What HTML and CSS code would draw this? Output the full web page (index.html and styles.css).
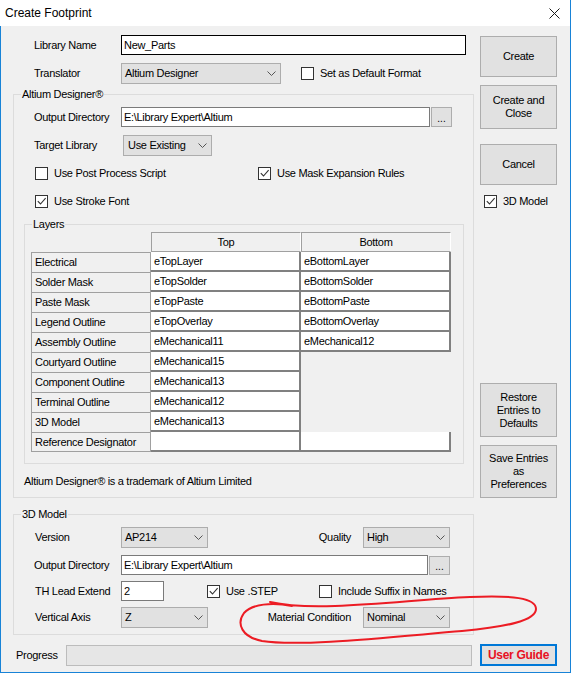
FILE: index.html
```html
<!DOCTYPE html>
<html>
<head>
<meta charset="utf-8">
<title>Create Footprint</title>
<link rel="stylesheet" href="styles.css">
</head>
<body>
<div class="window">
  <div class="titlebar">
    <span class="title">Create Footprint</span>
    <svg class="close" width="11" height="11" viewBox="0 0 11 11"><path d="M0.5 0.5L10.5 10.5M10.5 0.5L0.5 10.5" stroke="#1a1a1a" stroke-width="1"/></svg>
  </div>
  <div class="client">
    <div class="main">
      <div class="left">
        <div class="row r-libname">
          <span class="lbl lbl-top">Library Name</span>
          <div class="textbox tb-focus tb-libname">New_Parts</div>
        </div>
        <div class="row r-translator">
          <span class="lbl lbl-top">Translator</span>
          <div class="combo cb-translator"><span>Altium Designer</span><svg class="chev" width="9" height="5" viewBox="0 0 9 5"><path d="M0.5 0.5L4.5 4.5L8.5 0.5" fill="none" stroke="#555"/></svg></div>
          <div class="check cb-default"><span class="box"></span><span>Set as Default Format</span></div>
        </div>

        <div class="group g-altium">
          <span class="gtitle">Altium Designer®</span>
          <div class="row r-outdir">
            <span class="lbl lbl-grp">Output Directory</span>
            <div class="textbox tb-outdir">E:\Library Expert\Altium</div>
            <div class="dots dots-a">...</div>
          </div>
          <div class="row r-target">
            <span class="lbl lbl-grp">Target Library</span>
            <div class="combo cb-target"><span>Use Existing</span><svg class="chev" width="9" height="5" viewBox="0 0 9 5"><path d="M0.5 0.5L4.5 4.5L8.5 0.5" fill="none" stroke="#555"/></svg></div>
          </div>
          <div class="row r-checks1">
            <div class="check check-post"><span class="box"></span><span>Use Post Process Script</span></div>
            <div class="check"><span class="box"><svg width="11" height="11" viewBox="0 0 11 11"><path d="M1.8 5.2L4.5 8L9.6 2.2" fill="none" stroke="#333" stroke-width="1.1"/></svg></span><span>Use Mask Expansion Rules</span></div>
          </div>
          <div class="row r-checks2">
            <div class="check"><span class="box"><svg width="11" height="11" viewBox="0 0 11 11"><path d="M1.8 5.2L4.5 8L9.6 2.2" fill="none" stroke="#333" stroke-width="1.1"/></svg></span><span>Use Stroke Font</span></div>
          </div>

          <div class="group g-layers">
            <span class="gtitle">Layers</span>
            <div class="layers-grid">
              <div class="corner"></div><div class="hdr">Top</div><div class="hdr">Bottom</div>
              <div class="name">Electrical</div><div class="val">eTopLayer</div><div class="val">eBottomLayer</div>
              <div class="name">Solder Mask</div><div class="val">eTopSolder</div><div class="val">eBottomSolder</div>
              <div class="name">Paste Mask</div><div class="val">eTopPaste</div><div class="val">eBottomPaste</div>
              <div class="name">Legend Outline</div><div class="val">eTopOverlay</div><div class="val">eBottomOverlay</div>
              <div class="name">Assembly Outline</div><div class="val">eMechanical11</div><div class="val">eMechanical12</div>
              <div class="name">Courtyard Outline</div><div class="val">eMechanical15</div><div class="empty"></div>
              <div class="name">Component Outline</div><div class="val">eMechanical13</div><div class="empty"></div>
              <div class="name">Terminal Outline</div><div class="val">eMechanical12</div><div class="empty"></div>
              <div class="name">3D Model</div><div class="val">eMechanical13</div><div class="empty"></div>
              <div class="name name-last">Reference Designator</div><div class="val"></div><div class="val"></div>
            </div>
          </div>
          <div class="trademark">Altium Designer® is a trademark of Altium Limited</div>
        </div>

        <div class="group g-3d">
          <span class="gtitle">3D Model</span>
          <div class="row r-version">
            <span class="lbl lbl-3d">Version</span>
            <div class="combo cb-small"><span>AP214</span><svg class="chev" width="9" height="5" viewBox="0 0 9 5"><path d="M0.5 0.5L4.5 4.5L8.5 0.5" fill="none" stroke="#555"/></svg></div>
            <span class="lbl lbl-right">Quality</span>
            <div class="combo cb-small"><span>High</span><svg class="chev" width="9" height="5" viewBox="0 0 9 5"><path d="M0.5 0.5L4.5 4.5L8.5 0.5" fill="none" stroke="#555"/></svg></div>
          </div>
          <div class="row r-outdir3">
            <span class="lbl lbl-grp">Output Directory</span>
            <div class="textbox tb-outdir3">E:\Library Expert\Altium</div>
            <div class="dots dots-b">...</div>
          </div>
          <div class="row r-th">
            <span class="lbl lbl-3d">TH Lead Extend</span>
            <div class="textbox tb-th">2</div>
            <div class="check check-step"><span class="box"><svg width="11" height="11" viewBox="0 0 11 11"><path d="M1.8 5.2L4.5 8L9.6 2.2" fill="none" stroke="#333" stroke-width="1.1"/></svg></span><span>Use .STEP</span></div>
            <div class="check"><span class="box"></span><span>Include Suffix in Names</span></div>
          </div>
          <div class="row r-vaxis">
            <span class="lbl lbl-3d">Vertical Axis</span>
            <div class="combo cb-small"><span>Z</span><svg class="chev" width="9" height="5" viewBox="0 0 9 5"><path d="M0.5 0.5L4.5 4.5L8.5 0.5" fill="none" stroke="#555"/></svg></div>
            <span class="lbl lbl-right">Material Condition</span>
            <div class="combo cb-small"><span>Nominal</span><svg class="chev" width="9" height="5" viewBox="0 0 9 5"><path d="M0.5 0.5L4.5 4.5L8.5 0.5" fill="none" stroke="#555"/></svg></div>
          </div>
        </div>
      </div>

      <div class="right">
        <div class="btn b-create">Create</div>
        <div class="btn b-cc">Create and<br>Close</div>
        <div class="btn b-cancel">Cancel</div>
        <div class="check chk-3d"><span class="box"><svg width="11" height="11" viewBox="0 0 11 11"><path d="M1.8 5.2L4.5 8L9.6 2.2" fill="none" stroke="#333" stroke-width="1.1"/></svg></span><span>3D Model</span></div>
        <div class="btn b-restore">Restore<br>Entries to<br>Defaults</div>
        <div class="btn b-save">Save Entries<br>as<br>Preferences</div>
      </div>
    </div>

    <div class="progress-row">
      <span class="lbl lbl-progress">Progress</span>
      <div class="progress"></div>
      <div class="btn b-guide">User Guide</div>
    </div>
  </div>

  <svg class="annotation" width="571" height="673" viewBox="0 0 571 673">
    <path d="M292 606 C272 602 252 604 244 613 C236 624 242 637 262 641 C300 647 390 637 462 631 C505 627 536 621 536 609 C536 598 512 595 470 597 C425 599 385 604 335 606 C305 607 283 605 270 602" fill="none" stroke="#ec1c24" stroke-width="2" stroke-linecap="round" stroke-linejoin="round"/>
  </svg>
</div>
</body>
</html>
```

FILE: styles.css
```css
* {
  box-sizing: border-box;
}

html, body {
  margin: 0;
  padding: 0;
}

body {
  background: #ffffff;
  font-family: "Liberation Sans", Arial, sans-serif;
  font-size: 11px;
  letter-spacing: -0.3px;
  line-height: 13px;
  color: #000;
}

.window {
  position: relative;
  width: 571px;
  height: 673px;
  border-right: 1px solid #1883d7;
  border-bottom: 1px solid #1883d7;
  display: flex;
  flex-direction: column;
  background: #f0f0f0;
}

.titlebar {
  height: 26px;
  flex-shrink: 0;
  background: #ffffff;
  display: flex;
  align-items: center;
  justify-content: space-between;
  padding: 0 10px 0 5px;
}

.title {
  font-size: 12px;
  letter-spacing: 0;
}

.close {
  display: block;
}

.client {
  flex: 1;
  border-left: 1px solid #1883d7;
  background: #f0f0f0;
  display: flex;
  flex-direction: column;
}

.main {
  display: flex;
  height: 609px;
}

.left {
  width: 473px;
  padding-left: 12px;
  flex-shrink: 0;
}

.right {
  width: 77px;
  margin-left: 6px;
  display: flex;
  flex-direction: column;
}

/* rows */
.row {
  display: flex;
  align-items: center;
}

.lbl {
  flex-shrink: 0;
  white-space: nowrap;
}

.lbl-top { width: 87px; }
.lbl-grp { width: 87px; }
.lbl-3d { width: 86px; }

.lbl-right {
  width: 155px;
  text-align: right;
  padding-right: 12px;
}

.r-libname {
  margin-top: 9px;
  height: 20px;
  padding-left: 21px;
}

.r-translator {
  margin-top: 8px;
  height: 21px;
  padding-left: 21px;
}

/* controls */
.textbox {
  height: 20px;
  background: #ffffff;
  border: 1px solid #7a7a7a;
  padding-left: 2px;
  display: flex;
  align-items: center;
  white-space: nowrap;
  flex-shrink: 0;
}

.tb-focus {
  border-color: #000;
}

.tb-libname { width: 345px; }
.tb-outdir { width: 309px; }
.tb-outdir3 { width: 307px; }
.tb-th { width: 43px; }

.combo {
  height: 21px;
  background: #e1e1e1;
  border: 1px solid #adadad;
  display: flex;
  align-items: center;
  justify-content: space-between;
  padding: 0 4px 0 3px;
  white-space: nowrap;
  flex-shrink: 0;
}

.chev {
  display: block;
  flex-shrink: 0;
}

.cb-translator { width: 160px; }
.cb-target { width: 89px; margin-left: 2px; padding-left: 4px; }
.cb-small { width: 87px; }

.dots {
  width: 21px;
  height: 20px;
  margin-left: 1px;
  background: #e1e1e1;
  border: 1px solid #adadad;
  display: flex;
  align-items: flex-end;
  justify-content: center;
  padding-bottom: 3px;
  font-size: 10px;
  letter-spacing: 0;
  line-height: 8px;
  flex-shrink: 0;
}

.dots-b {
  height: 19px;
}

/* checkboxes */
.check {
  display: flex;
  align-items: center;
  white-space: nowrap;
  flex-shrink: 0;
}

.box {
  width: 13px;
  height: 13px;
  border: 1px solid #333;
  background: #ffffff;
  margin-right: 6px;
  flex-shrink: 0;
  display: flex;
}

.box svg {
  display: block;
}

.cb-default { margin-left: 20px; }
.check-post { width: 223px; }
.check-step { width: 112px; margin-left: 43px; }

/* groups */
.group {
  position: relative;
  border: 1px solid #dcdcdc;
}

.gtitle {
  position: absolute;
  top: -8px;
  left: 7px;
  padding: 0 1px;
  line-height: 14px;
  background: #f0f0f0;
  white-space: nowrap;
}

.g-altium {
  margin-top: 10px;
  width: 461px;
  height: 404px;
}

.r-outdir {
  margin-top: 12px;
  height: 20px;
  padding-left: 20px;
}

.r-target {
  margin-top: 8px;
  height: 21px;
  padding-left: 20px;
}

.r-checks1 {
  margin-top: 11px;
  height: 13px;
  padding-left: 21px;
}

.r-checks2 {
  margin-top: 15px;
  height: 13px;
  padding-left: 21px;
}

.g-layers {
  margin-top: 16px;
  margin-left: 10px;
  width: 440px;
  height: 240px;
}

.gtitle-layers {
  left: 7px;
}

.layers-grid {
  display: grid;
  grid-template-columns: 120px 150px 150px;
  grid-auto-rows: 20px;
  width: 420px;
  margin-top: 7px;
  margin-left: 6px;
}

.hdr {
  border-top: 1px solid #a0a0a0;
  border-left: 1px solid #a0a0a0;
  border-bottom: 1px solid #a0a0a0;
  border-right: 1px solid #ffffff;
  display: flex;
  align-items: center;
  justify-content: center;
}

.name {
  border-top: 1px solid #a0a0a0;
  border-left: 1px solid #a0a0a0;
  border-right: 1px solid #a0a0a0;
  padding-left: 3px;
  display: flex;
  align-items: center;
  white-space: nowrap;
}

.name-last {
  border-bottom: 1px solid #a0a0a0;
}

.val {
  background: #ffffff;
  border-right: 2px solid #808080;
  border-bottom: 2px solid #808080;
  padding: 1px 0 0 3px;
  display: flex;
  align-items: center;
  white-space: nowrap;
}

.trademark {
  margin-top: 11px;
  padding-left: 10px;
  white-space: nowrap;
}

.g-3d {
  margin-top: 16px;
  width: 461px;
  height: 121px;
}

.r-version {
  margin-top: 12px;
  height: 21px;
  padding-left: 21px;
}

.r-outdir3 {
  margin-top: 7px;
  height: 20px;
  padding-left: 20px;
}

.r-th {
  margin-top: 6px;
  height: 20px;
  padding-left: 21px;
}

.r-vaxis {
  margin-top: 6px;
  height: 21px;
  padding-left: 21px;
}

/* buttons */
.btn {
  width: 77px;
  background: #e1e1e1;
  border: 1px solid #adadad;
  display: flex;
  align-items: center;
  justify-content: center;
  text-align: center;
  line-height: 13px;
  flex-shrink: 0;
}

.b-create { margin-top: 10px; height: 41px; }
.b-cc { margin-top: 8px; height: 44px; }
.b-cancel { margin-top: 15px; height: 41px; }
.chk-3d { margin-top: 10px; margin-left: 4px; height: 13px; }
.b-restore { margin-top: 175px; height: 54px; }
.b-save { margin-top: 8px; height: 53px; }

/* progress */
.progress-row {
  display: flex;
  align-items: center;
  margin-top: 9px;
  height: 22px;
  padding-left: 15px;
}

.lbl-progress {
  width: 50px;
}

.progress {
  width: 406px;
  height: 21px;
  background: #e6e6e6;
  border: 1px solid #bcbcbc;
}

.b-guide {
  margin-left: 8px;
  height: 22px;
  border: 2px solid #0078d7;
  color: #e81123;
  font-weight: bold;
  font-size: 12px;
}

.annotation {
  position: absolute;
  top: 0;
  left: 0;
  pointer-events: none;
}
```
